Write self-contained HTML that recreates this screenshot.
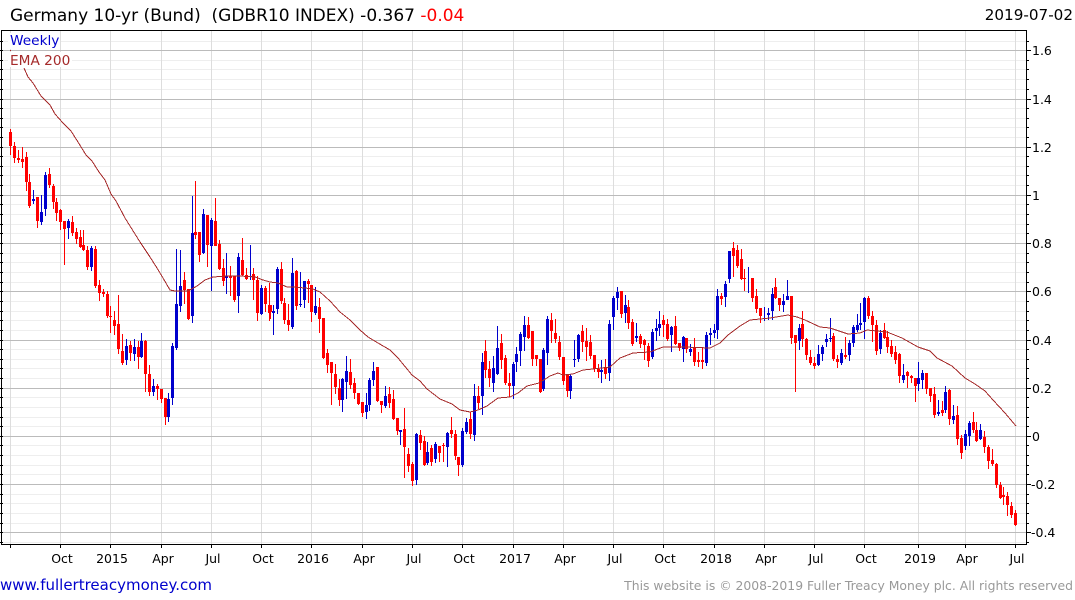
<!DOCTYPE html>
<html><head><meta charset="utf-8"><title>Germany 10-yr (Bund)</title>
<style>html,body{margin:0;padding:0;background:#fff;width:1075px;height:600px;overflow:hidden}svg{display:block}text{font-family:"DejaVu Sans",sans-serif}</style></head>
<body>
<svg width="1075" height="600" viewBox="0 0 1075 600" xmlns="http://www.w3.org/2000/svg">
<rect width="1075" height="600" fill="#fff"/>
<g shape-rendering="crispEdges" fill="none">
<path stroke="#eee" d="M1 41.5H1026M1 60.5H1026M1 69.5H1026M1 79.5H1026M1 89.5H1026M1 108.5H1026M1 118.5H1026M1 127.5H1026M1 137.5H1026M1 156.5H1026M1 166.5H1026M1 175.5H1026M1 185.5H1026M1 204.5H1026M1 214.5H1026M1 224.5H1026M1 233.5H1026M1 253.5H1026M1 262.5H1026M1 272.5H1026M1 282.5H1026M1 301.5H1026M1 311.5H1026M1 320.5H1026M1 330.5H1026M1 349.5H1026M1 359.5H1026M1 368.5H1026M1 378.5H1026M1 397.5H1026M1 407.5H1026M1 417.5H1026M1 426.5H1026M1 445.5H1026M1 455.5H1026M1 465.5H1026M1 474.5H1026M1 494.5H1026M1 503.5H1026M1 513.5H1026M1 523.5H1026M1 542.5H1026"/>
<path stroke="#ddd" d="M10.5 30V544M60.5 30V544M110.5 30V544M161.5 30V544M211.5 30V544M261.5 30V544M311.5 30V544M362.5 30V544M412.5 30V544M462.5 30V544M513.5 30V544M563.5 30V544M613.5 30V544M663.5 30V544M714.5 30V544M764.5 30V544M814.5 30V544M864.5 30V544M918.5 30V544M965.5 30V544M1015.5 30V544"/>
<path stroke="#bbb" d="M1 50.5H1026M1 99.5H1026M1 147.5H1026M1 195.5H1026M1 243.5H1026M1 291.5H1026M1 340.5H1026M1 388.5H1026M1 436.5H1026M1 484.5H1026M1 532.5H1026"/>
</g>
<rect x="8" y="33" width="52" height="16" fill="#fff"/>
<rect x="8" y="52" width="64" height="15" fill="#fff"/>
<g shape-rendering="crispEdges" fill="none">
<path stroke="#f00" d="M10.5 129V155M14.5 142V163M18.5 150V163M22.5 147V168M26.5 152V191M29.5 174V208M37.5 197V228M49.5 168V188M53.5 184V209M56.5 198V221M60.5 209V230M64.5 221V265M72.5 216V236M76.5 228V244M80.5 230V248M83.5 230V251M87.5 246V270M95.5 246V288M99.5 280V301M103.5 289V297M107.5 291V318M110.5 306V333M114.5 311V335M118.5 295V354M122.5 334V365M130.5 341V361M138.5 341V369M145.5 340V392M149.5 365V396M157.5 384V400M161.5 389V403M165.5 398V425M184.5 272V304M188.5 289V320M195.5 181V239M199.5 232V262M207.5 215V267M215.5 198V246M219.5 240V270M223.5 259V286M230.5 266V296M234.5 276V302M242.5 238V276M246.5 268V280M253.5 268V300M257.5 276V321M265.5 286V312M269.5 283V321M270.5 305V319M281.5 262V304M284.5 298V324M288.5 304V331M296.5 270V310M308.5 279V303M311.5 285V322M319.5 298V333M323.5 318V359M327.5 349V373M331.5 362V405M335.5 364V394M339.5 379V406M350.5 359V389M354.5 378V399M358.5 393V405M362.5 402V417M377.5 367V402M381.5 401V413M389.5 387V408M393.5 390V420M397.5 418V435M404.5 408V478M408.5 448V472M412.5 462V486M420.5 430V450M424.5 436V466M431.5 445V466M439.5 446V462M443.5 443V462M451.5 417V438M455.5 430V460M458.5 457V476M470.5 412V439M478.5 386V409M485.5 340V378M489.5 361V387M501.5 334V369M505.5 355V385M509.5 373V397M528.5 317V339M532.5 331V366M536.5 355V366M540.5 359V393M551.5 313V343M555.5 319V343M559.5 336V360M563.5 357V385M567.5 375V397M582.5 325V352M586.5 328V361M590.5 335V359M594.5 355V372M598.5 364V378M605.5 359V379M621.5 291V318M628.5 300V329M632.5 319V346M640.5 334V348M644.5 339V360M648.5 343V367M663.5 315V337M667.5 319V341M675.5 316V345M679.5 343V351M686.5 338V353M694.5 338V366M698.5 352V367M702.5 347V369M721.5 293V305M733.5 242V277M737.5 245V268M741.5 249V280M744.5 269V291M752.5 278V302M756.5 289V313M760.5 308V323M775.5 278V299M779.5 298V311M791.5 296V344M795.5 335V392M802.5 311V347M806.5 338V360M810.5 350V365M814.5 357V369M833.5 333V361M837.5 355V368M845.5 337V359M868.5 296V319M872.5 311V342M876.5 320V355M884.5 323V339M887.5 331V353M891.5 340V357M895.5 346V364M899.5 353V383M907.5 371V388M911.5 375V383M915.5 378V402M926.5 373V394M930.5 388V402M934.5 387V418M942.5 401V416M949.5 389V425M957.5 406V445M961.5 435V459M973.5 412V433M976.5 422V442M984.5 431V453M988.5 445V469M992.5 449V466M996.5 463V488M1000.5 482V499M1003.5 487V505M1007.5 492V516M1011.5 502V518M1015.5 510V526"/>
<path stroke="#f00" stroke-width="3" d="M10.5 132V146M14.5 146V158M18.5 158V160M22.5 159V162M26.5 157V182M29.5 182V206M37.5 197V221M49.5 174V185M53.5 186V202M56.5 202V213M60.5 210V222M64.5 221V229M72.5 222V233M76.5 232V239M80.5 237V247M83.5 245V250M87.5 250V267M95.5 249V286M99.5 285V293M103.5 292V294M107.5 294V316M110.5 316V317M114.5 320V326M118.5 324V349M122.5 351V363M130.5 345V353M138.5 347V357M145.5 341V374M149.5 374V392M157.5 386V389M161.5 389V399M165.5 398V417M184.5 280V290M188.5 289V319M195.5 232V235M199.5 232V255M207.5 215V245M215.5 221V246M219.5 244V269M223.5 268V281M230.5 276V278M234.5 276V300M242.5 260V275M246.5 275V279M253.5 274V280M257.5 280V313M265.5 288V304M269.5 305V313M270.5 305V312M281.5 269V301M284.5 303V320M288.5 320V325M296.5 271V306M308.5 281V284M311.5 285V312M319.5 307V319M323.5 318V358M327.5 353V365M331.5 362V373M335.5 374V387M339.5 388V400M350.5 372V385M354.5 383V393M358.5 393V404M362.5 402V413M377.5 367V401M381.5 401V405M389.5 394V403M393.5 399V419M397.5 418V431M404.5 429V447M408.5 454V466M412.5 464V481M420.5 435V443M424.5 441V465M431.5 448V462M439.5 446V453M443.5 445V446M451.5 430V434M455.5 434V456M458.5 457V465M470.5 419V434M478.5 396V403M485.5 351V370M489.5 369V378M501.5 343V360M505.5 358V383M509.5 383V386M528.5 325V338M532.5 331V359M536.5 355V359M540.5 359V392M551.5 320V331M555.5 333V339M559.5 342V357M563.5 357V381M567.5 375V391M582.5 331V342M586.5 341V347M590.5 342V356M594.5 355V369M598.5 369V372M605.5 368V374M621.5 291V314M628.5 307V323M632.5 322V344M640.5 336V344M644.5 340V345M648.5 346V361M663.5 320V325M667.5 324V339M675.5 326V344M679.5 343V348M686.5 338V349M694.5 347V362M698.5 360V362M702.5 360V362M721.5 296V299M733.5 248V256M737.5 250V266M741.5 259V279M744.5 278V279M752.5 278V298M756.5 296V309M760.5 308V316M775.5 287V298M779.5 298V305M791.5 296V338M795.5 335V343M802.5 324V339M806.5 339V355M810.5 357V363M814.5 363V366M833.5 336V359M837.5 359V362M845.5 355V357M868.5 298V316M872.5 316V325M876.5 325V351M884.5 330V338M887.5 337V347M891.5 346V354M895.5 352V360M899.5 354V376M907.5 372V376M911.5 376V378M915.5 378V386M926.5 373V389M930.5 388V396M934.5 394V415M942.5 410V413M949.5 390V419M957.5 415V439M961.5 438V453M973.5 422V430M976.5 430V441M984.5 437V447M988.5 447V461M992.5 460V464M996.5 464V485M1000.5 485V498M1003.5 495V497M1007.5 496V505M1011.5 506V515M1015.5 513V525"/>
<path stroke="#00c" d="M33.5 190V204M41.5 195V225M45.5 172V216M68.5 219V239M91.5 246V271M126.5 339V365M134.5 339V361M141.5 333V358M153.5 379V396M168.5 393V422M172.5 343V405M176.5 249V350M180.5 250V312M192.5 196V323M203.5 209V254M211.5 218V291M226.5 253V294M238.5 253V313M250.5 245V280M261.5 285V315M273.5 305V335M277.5 267V314M292.5 258V329M300.5 272V307M304.5 281V308M315.5 287V315M342.5 378V412M346.5 356V399M366.5 393V419M369.5 378V411M373.5 362V386M385.5 386V408M400.5 430V445M416.5 433V485M427.5 442V465M435.5 442V463M447.5 432V467M462.5 428V467M466.5 418V434M474.5 384V441M482.5 353V415M493.5 356V392M497.5 326V375M513.5 362V399M516.5 347V372M520.5 332V366M524.5 316V351M543.5 348V391M547.5 316V365M570.5 374V399M574.5 340V367M578.5 334V362M601.5 360V383M609.5 320V381M613.5 296V330M617.5 287V310M625.5 295V323M636.5 323V342M652.5 329V359M656.5 319V341M659.5 311V336M671.5 326V352M683.5 336V362M690.5 344V356M706.5 332V366M710.5 328V345M714.5 324V338M717.5 289V339M725.5 281V307M729.5 251V283M748.5 267V293M764.5 307V321M768.5 308V320M772.5 288V320M783.5 294V312M787.5 280V300M799.5 324V350M818.5 345V366M822.5 345V361M826.5 334V347M830.5 318V342M841.5 349V365M849.5 340V361M853.5 325V347M857.5 314V332M860.5 303V330M864.5 297V339M880.5 330V354M903.5 364V383M918.5 362V391M922.5 370V389M938.5 400V416M945.5 386V413M953.5 405V424M965.5 430V450M969.5 421V446M980.5 424V440"/>
<path stroke="#00c" stroke-width="3" d="M33.5 199V201M41.5 212V222M45.5 175V209M68.5 221V228M91.5 248V267M126.5 346V360M134.5 347V354M141.5 341V357M153.5 386V392M168.5 399V417M172.5 346V398M176.5 304V348M180.5 286V306M192.5 233V316M203.5 214V253M211.5 220V246M226.5 276V278M238.5 257V296M250.5 276V277M261.5 288V314M273.5 311V313M277.5 269V309M292.5 273V327M300.5 304V305M304.5 281V300M315.5 306V313M342.5 379V400M346.5 371V382M366.5 405V412M369.5 380V405M373.5 371V380M385.5 396V406M400.5 430V432M416.5 434V480M427.5 452V463M435.5 444V459M447.5 433V447M462.5 431V465M466.5 422V432M474.5 396V435M482.5 362V396M493.5 368V383M497.5 348V374M513.5 364V386M516.5 354V362M520.5 334V351M524.5 325V337M543.5 350V389M547.5 319V353M570.5 376V391M574.5 359V360M578.5 335V359M601.5 370V372M609.5 324V373M613.5 298V317M617.5 292V298M625.5 305V313M636.5 336V338M652.5 332V357M656.5 328V331M659.5 324V328M671.5 327V335M683.5 337V349M690.5 349V352M706.5 335V363M710.5 333V335M714.5 330V333M717.5 296V330M725.5 284V297M729.5 251V279M768.5 313V315M772.5 294V311M783.5 301V305M787.5 296V300M799.5 328V341M818.5 354V365M822.5 347V354M826.5 339V342M830.5 338V339M841.5 353V363M849.5 343V355M853.5 327V343M857.5 325V330M860.5 323V325M864.5 298V322M880.5 333V349M903.5 375V380M918.5 378V384M922.5 373V380M938.5 412V414M945.5 392V410M953.5 416V420M965.5 434V446M969.5 423V436M980.5 430V439"/>
</g>
<polyline fill="none" stroke="#a52a2a" stroke-width="1" shape-rendering="crispEdges" points="24,68 28,77 33,83 41,96 50,105 55,114 63,123 71,131 78,142 86,155 92,161 99,172 105,180 111,194 116,201 125,218 140,242 150,257 157,268 163,278 170,290 175,291 188,291 197,286 205,280 213,277 227,276 240,276 255,277 263,280 270,282 278,283 287,287 293,287 305,288 313,289 320,292 330,301 340,312 350,320 360,330 368,337 378,343 390,350 398,358 412,375 420,381 427,389 440,399 452,404 460,410 470,412 478,410 487,406 498,398 510,397 518,393 527,386 539,383 550,376 558,373 563,375 573,374 583,370 593,369 610,367 620,358 633,353 650,352 663,347 683,347 710,348 720,343 728,335 740,326 750,320 770,318 788,315 797,317 805,320 820,327 830,328 848,334 860,333 867,330 887,332 902,338 918,347 930,351 937,358 952,366 965,378 975,384 985,391 993,400 1005,413 1016,426"/>
<rect x="10" y="50" width="1" height="1" fill="#a52a2a"/>
<g shape-rendering="crispEdges" fill="none" stroke="#000">
<path d="M1.5 30V544.5M1 30.5H1026.5M1 544.5H1026.5M1026.5 30V545"/>
<path d="M1026 41.5H1029M1026 60.5H1029M1026 69.5H1029M1026 79.5H1029M1026 89.5H1029M1026 108.5H1029M1026 118.5H1029M1026 127.5H1029M1026 137.5H1029M1026 156.5H1029M1026 166.5H1029M1026 175.5H1029M1026 185.5H1029M1026 204.5H1029M1026 214.5H1029M1026 224.5H1029M1026 233.5H1029M1026 253.5H1029M1026 262.5H1029M1026 272.5H1029M1026 282.5H1029M1026 301.5H1029M1026 311.5H1029M1026 320.5H1029M1026 330.5H1029M1026 349.5H1029M1026 359.5H1029M1026 368.5H1029M1026 378.5H1029M1026 397.5H1029M1026 407.5H1029M1026 417.5H1029M1026 426.5H1029M1026 445.5H1029M1026 455.5H1029M1026 465.5H1029M1026 474.5H1029M1026 494.5H1029M1026 503.5H1029M1026 513.5H1029M1026 523.5H1029M1026 542.5H1029"/>
<path d="M1026 50.5H1031M1026 99.5H1031M1026 147.5H1031M1026 195.5H1031M1026 243.5H1031M1026 291.5H1031M1026 340.5H1031M1026 388.5H1031M1026 436.5H1031M1026 484.5H1031M1026 532.5H1031"/>
<path d="M0 41.5H3M0 60.5H3M0 69.5H3M0 79.5H3M0 89.5H3M0 108.5H3M0 118.5H3M0 127.5H3M0 137.5H3M0 156.5H3M0 166.5H3M0 175.5H3M0 185.5H3M0 204.5H3M0 214.5H3M0 224.5H3M0 233.5H3M0 253.5H3M0 262.5H3M0 272.5H3M0 282.5H3M0 301.5H3M0 311.5H3M0 320.5H3M0 330.5H3M0 349.5H3M0 359.5H3M0 368.5H3M0 378.5H3M0 397.5H3M0 407.5H3M0 417.5H3M0 426.5H3M0 445.5H3M0 455.5H3M0 465.5H3M0 474.5H3M0 494.5H3M0 503.5H3M0 513.5H3M0 523.5H3M0 542.5H3"/>
<path d="M0 50.5H3M0 99.5H3M0 147.5H3M0 195.5H3M0 243.5H3M0 291.5H3M0 340.5H3M0 388.5H3M0 436.5H3M0 484.5H3M0 532.5H3"/>
<path d="M10.5 544V548M60.5 544V548M110.5 544V548M161.5 544V548M211.5 544V548M261.5 544V548M311.5 544V548M362.5 544V548M412.5 544V548M462.5 544V548M513.5 544V548M563.5 544V548M613.5 544V548M663.5 544V548M714.5 544V548M764.5 544V548M814.5 544V548M864.5 544V548M918.5 544V548M965.5 544V548M1015.5 544V548"/>
</g>
<text x="10" y="21" font-size="17" fill="#000" xml:space="preserve">Germany 10-yr (Bund)  (GDBR10 INDEX) -0.367 <tspan fill="#f00">-0.04</tspan></text>
<text x="1073" y="20" font-size="15.2" fill="#000" text-anchor="end">2019-07-02</text>
<text x="10" y="45" font-size="13.7" fill="#00c">Weekly</text>
<text x="10" y="65" font-size="13.7" fill="#a52a2a">EMA 200</text>
<g font-size="12.5" fill="#000">
<text x="1032" y="55">1.6</text><text x="1032" y="104">1.4</text><text x="1032" y="152">1.2</text><text x="1032" y="200">1</text><text x="1032" y="248">0.8</text><text x="1032" y="296">0.6</text><text x="1032" y="345">0.4</text><text x="1032" y="393">0.2</text><text x="1032" y="441">0</text><text x="1031" y="489">-0.2</text><text x="1031" y="537">-0.4</text>
</g>
<g font-size="12.5" fill="#000" text-anchor="middle">
<text x="62" y="563">Oct</text><text x="112" y="563">2015</text><text x="163" y="563">Apr</text><text x="213" y="563">Jul</text><text x="263" y="563">Oct</text><text x="313" y="563">2016</text><text x="364" y="563">Apr</text><text x="414" y="563">Jul</text><text x="464" y="563">Oct</text><text x="515" y="563">2017</text><text x="565" y="563">Apr</text><text x="615" y="563">Jul</text><text x="665" y="563">Oct</text><text x="716" y="563">2018</text><text x="766" y="563">Apr</text><text x="816" y="563">Jul</text><text x="866" y="563">Oct</text><text x="920" y="563">2019</text><text x="967" y="563">Apr</text><text x="1017" y="563">Jul</text>
</g>
<text x="0" y="590" font-size="15" fill="#00c">www.fullertreacymoney.com</text>
<text x="1073" y="590" font-size="12.4" fill="#999" text-anchor="end">This website is © 2008-2019 Fuller Treacy Money plc. All rights reserved</text>
</svg>
</body></html>
